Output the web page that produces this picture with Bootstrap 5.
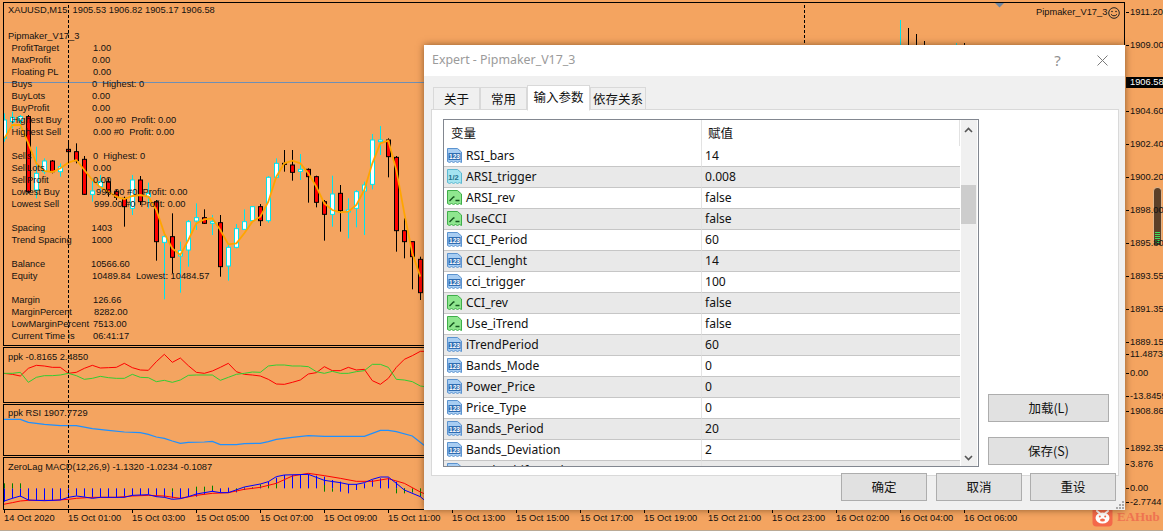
<!DOCTYPE html>
<html lang="en">
<head>
    <meta charset="UTF-8">
    <title>XAUUSD,M15 - Expert</title>
    <link rel="stylesheet" href="https://cdn.jsdelivr.net/npm/bootstrap@5.3.0/dist/css/bootstrap.min.css">
    <style>
        html, body { margin: 0; height: 531px; overflow: hidden; background: #f4a460; }
        body { font-family: "Noto Sans", "Liberation Sans", sans-serif; color: #111; }

        /* terminal */
        .terminal { position: relative; width: 1163px; height: 531px; padding: 2px 38px 0 3px; border-bottom: 1px solid #b9a995; }
        .pane { position: relative; flex: none; border: 1px solid #000; overflow: hidden; margin-bottom: 1px; }
        .pane-main { height: 344px; }
        .pane-a { height: 56px; }
        .pane-b { height: 52px; }
        .pane-c { height: 53px; }
        .pane svg { position: absolute; left: 0; top: 0; }
        .chart-txt { position: absolute; font-family: "Liberation Sans", sans-serif; font-size: 9.3px; line-height: 12px; white-space: pre; color: #111; }
        .axis { position: absolute; left: 1125px; top: 0; width: 38px; height: 531px; overflow: hidden; }
        .tick { position: absolute; background: #000; }
        .price-tag { position: absolute; left: 1px; width: 37px; height: 11px; background: #000; color: #fff; font-family: "Liberation Sans", sans-serif; font-size: 9.3px; line-height: 11px; padding-left: 4px; }
        .time-axis { position: absolute; left: 0; top: 510px; width: 1125px; height: 20px; }
        .pane svg.smiley { left: auto; right: 4px; top: 4px; }
        .bars-widget { position: absolute; left: 28px; top: 187px; width: 9px; height: 58px; background: #5b3f28; border: 1px solid #e0b48a; border-bottom: 0; border-radius: 5px 5px 0 0; }
        .bars-widget i { display: block; height: 1px; margin: 1px 1px 0; background: #3fe05a; }
        .bars-stack { margin-top: 44px; }
        .watermark { position: absolute; left: 1092px; top: 506px; }
        .watermark-txt { color: #ef7350; font-family: "Liberation Serif", serif; font-weight: 700; font-size: 13px; line-height: 20px; }

        /* dialog */
        .dlg { position: absolute; left: 424px; top: 45px; width: 701px; height: 465px; background: #f0f0f0; box-shadow: 0 0 7px rgba(70, 40, 10, .6); }
        .dlg-title { height: 31px; background: #fff; padding: 0 0 0 8px; font-size: 12.4px; color: #9b9b9b; }
        .dlg-help { font-size: 15px; color: #8f8f8f; width: 45px; text-align: center; }
        .dlg-close { width: 45px; text-align: center; }
        .dlg-tabs { height: 33px; padding: 9px 0 0 9px; border: 0; flex-wrap: nowrap; }
        .dlg-tabs .nav-link { height: 24px; margin: 2px 0 0; padding: 0; font-size: 12.5px; line-height: 22px; text-align: center; color: #111; background: #f0f0f0; border: 1px solid #d9d9d9; border-radius: 0; }
        .dlg-tabs .nav-link.active { height: 26px; margin-top: 0; background: #fff; border-bottom-color: #fff; position: relative; z-index: 2; }
        .tab-s { width: 47px; }
        .tab-m { width: 63px; }
        .tab-l { width: 56px; }
        .cjk { font-family: "Noto Sans CJK SC", "Noto Sans", sans-serif; }
        .dlg-panel { position: relative; height: 367px; margin: 0 6px 0 7px; background: #fff; border: 1px solid #d9d9d9; padding: 9px 0 0 11px; }
        .param-box { width: 536px; height: 348px; border: 1px solid #828790; position: relative; overflow: hidden; background: #fff; }
        .param-tbl { width: 516px; table-layout: fixed; margin: 0; border-collapse: separate; border-spacing: 0; --bs-table-bg: transparent; font-size: 12.1px; color: #111; }
        .param-tbl th, .param-tbl td { padding: 0; border: 0; font-weight: 400; vertical-align: middle; }
        .param-tbl th { height: 26px; font-size: 12.5px; }
        .param-tbl td { height: 21px; border-bottom: 1px solid #c6c6c6; line-height: 20px; }
        .param-tbl tbody tr:nth-child(even) td { background: #e9e9e9; }
        .param-tbl th:first-child { width: 257px; padding-left: 7px; }
        .param-tbl th:last-child { padding-left: 6px; border-left: 1px solid #e2e2e2; border-right: 1px solid #e2e2e2; }
        .param-tbl td:last-child { padding-left: 3px; border-left: 1px solid #e4e4e4; }
        .param-name { display: flex; align-items: center; gap: 3px; padding-left: 2px; height: 20px; }
        .param-scroll { position: absolute; right: 1px; top: 0; bottom: 0; width: 16px; background: #f0f0f0; }
        .scroll-thumb { position: absolute; left: 0; top: 65px; width: 15px; height: 39px; background: #cdcdcd; }
        .scroll-up { position: absolute; left: 3px; top: 7px; }
        .scroll-down { position: absolute; left: 3px; bottom: 5px; }
        .side-btns { position: absolute; left: 556px; top: 284px; width: 121px; gap: 15px; }
        .win-btn { --bs-btn-padding-y: 0; --bs-btn-padding-x: 0; --bs-btn-border-radius: 0; --bs-btn-font-size: 12.5px; background: #e1e1e1; border: 1px solid #adadad; color: #111; height: 28px; line-height: 24px; }
        .foot-btns { position: relative; z-index: 2; margin-top: -3px; padding-right: 9px; gap: 8px; }
        .foot-btns .win-btn { width: 86px; }
        .foot-btns .win-btn:first-child { margin-right: 1px; }
        .grip { position: absolute; right: 1px; bottom: 1px; }
    </style>
</head>
<body>
    <svg width="0" height="0" class="d-block">
        <defs>
            <symbol id="doc-blue" viewBox="0 0 17 16">
                <path d="M1.5 .5h10l4 3.500v10.500l-2-1-2 1-2-1-2 1-2-1-2 1-2-1z" fill="#a8cdf2" stroke="#5b93cf"/>
                <rect x="2.500" y="5" width="12" height="7" fill="#2f6db3"/>
                <text x="8.500" y="11" text-anchor="middle" font-size="6.500" font-weight="700" fill="#fff" font-family="Liberation Sans">123</text>
            </symbol>
            <symbol id="doc-cyan" viewBox="0 0 17 16">
                <path d="M1.5 .5h10l4 3.500v10.500l-2-1-2 1-2-1-2 1-2-1-2 1-2-1z" fill="#a4e3f0" stroke="#5cb9d2"/>
                <text x="7.500" y="11" text-anchor="middle" font-size="7.500" font-weight="700" fill="#23728c" font-family="Liberation Sans">1/2</text>
            </symbol>
            <symbol id="doc-green" viewBox="0 0 17 16">
                <path d="M1.5 .5h10l4 3.500v10.500l-2-1-2 1-2-1-2 1-2-1-2 1-2-1z" fill="#8fe68f" stroke="#3fae4a"/>
                <path d="M3.500 11l4-4h1M9.500 10.500H13.500" fill="none" stroke="#15561f" stroke-width="1.400"/>
            </symbol>
        </defs>
    </svg>

    <div class="terminal d-flex flex-column">
        <div class="pane pane-main" id="paneMain">
            <svg id="svgMain" width="1120" height="342" viewBox="4 3 1120 342"></svg>
            <svg class="smiley" width="12" height="12" viewBox="0 0 12 12">
                <circle cx="6" cy="6" r="5.300" fill="none" stroke="#222"/>
                <circle cx="4" cy="4.500" r=".8" fill="#222"/><circle cx="8" cy="4.500" r=".8" fill="#222"/>
                <path d="M3 7.300c1.500 2 4.500 2 6 0" fill="none" stroke="#222"/>
            </svg>
        </div>
        <div class="pane pane-a" id="paneA"><svg id="svgA" width="1120" height="54" viewBox="4 348 1120 54"></svg></div>
        <div class="pane pane-b" id="paneB"><svg id="svgB" width="1120" height="50" viewBox="4 405 1120 50"></svg></div>
        <div class="pane pane-c" id="paneC"><svg id="svgC" width="1120" height="51" viewBox="4 458 1120 51"></svg></div>

        <div class="time-axis" id="timeAxis"></div>
        <div class="axis" id="priceAxis">
            <div class="bars-widget"><div class="bars-stack"><i></i><i></i><i></i><i></i><i></i><i></i></div></div>
        </div>

        <div class="watermark d-flex align-items-center gap-1">
            <svg width="21" height="21" viewBox="0 0 21 21">
                <rect x=".5" y=".5" width="20" height="20" rx="4" fill="#f4684a"/>
                <path d="M5 5l3 2.500M16 5l-3 2.500" stroke="#fff" stroke-width="2" stroke-linecap="round"/>
                <ellipse cx="10.500" cy="12" rx="7" ry="5.500" fill="#fff"/>
                <circle cx="7.800" cy="10.500" r="1" fill="#f4684a"/><circle cx="13.200" cy="10.500" r="1" fill="#f4684a"/>
                <ellipse cx="10.500" cy="14" rx="2.500" ry="1.500" fill="#f4684a"/>
            </svg>
            <span class="watermark-txt">EAHub</span>
        </div>

        <!-- Expert properties window -->
        <div class="dlg d-flex flex-column">
            <div class="dlg-title d-flex align-items-center">
                <span class="flex-grow-1">Expert - Pipmaker_V17_3</span>
                <span class="dlg-help">?</span>
                <span class="dlg-close">
                    <svg width="11" height="11" viewBox="0 0 11 11"><path d="M.5.500l10 10M10.500.500l-10 10" stroke="#7a7a7a" fill="none"/></svg>
                </span>
            </div>
            <ul class="nav dlg-tabs cjk">
                <li class="nav-item"><a class="nav-link tab-s" href="#">关于</a></li>
                <li class="nav-item"><a class="nav-link tab-s" href="#">常用</a></li>
                <li class="nav-item"><a class="nav-link tab-m active" href="#">输入参数</a></li>
                <li class="nav-item"><a class="nav-link tab-l" href="#">依存关系</a></li>
            </ul>
            <div class="dlg-panel">
                <div class="param-box">
                    <table class="table param-tbl">
                        <thead>
                            <tr><th class="cjk">变量</th><th class="cjk">赋值</th></tr>
                        </thead>
                        <tbody id="paramRows"></tbody>
                    </table>
                    <div class="param-scroll">
                        <svg class="scroll-up" width="9" height="6" viewBox="0 0 9 6"><path d="M1 5l3.500-3.500L8 5" fill="none" stroke="#555" stroke-width="1.600"/></svg>
                        <div class="scroll-thumb"></div>
                        <svg class="scroll-down" width="9" height="6" viewBox="0 0 9 6"><path d="M1 1l3.500 3.500L8 1" fill="none" stroke="#555" stroke-width="1.600"/></svg>
                    </div>
                </div>
                <div class="side-btns d-flex flex-column">
                    <button type="button" class="btn win-btn cjk">加载(L)</button>
                    <button type="button" class="btn win-btn cjk">保存(S)</button>
                </div>
            </div>
            <div class="foot-btns d-flex justify-content-end">
                <button type="button" class="btn win-btn cjk">确定</button>
                <button type="button" class="btn win-btn cjk">取消</button>
                <button type="button" class="btn win-btn cjk">重设</button>
            </div>
            <svg class="grip" width="8" height="8" viewBox="0 0 8 8" fill="#a9a9a9">
                <rect x="6" y="0" width="2" height="2"/><rect x="3" y="3" width="2" height="2"/><rect x="6" y="3" width="2" height="2"/>
                <rect x="0" y="6" width="2" height="2"/><rect x="3" y="6" width="2" height="2"/><rect x="6" y="6" width="2" height="2"/>
            </svg>
        </div>
    </div>

    <script src="https://cdn.jsdelivr.net/npm/bootstrap@5.3.0/dist/js/bootstrap.bundle.min.js"></script>
    <script>
        const NS = 'http://www.w3.org/2000/svg';

        function add(svg, tag, attrs) {
            const el = document.createElementNS(NS, tag);
            for (const k in attrs) el.setAttribute(k, attrs[k]);
            svg.appendChild(el);
            return el;
        }

        // points are read off a 3x crop, so yBase is the crop's top edge
        function line(svg, pts, color, width, yBase) {
            add(svg, 'polyline', {
                points: pts.map(p => (p[0] / 3) + ',' + (p[1] / 3 + yBase)).join(' '),
                fill: 'none', stroke: color, 'stroke-width': width
            });
        }

        function label(parent, text, x, y) {
            const el = document.createElement('span');
            el.className = 'chart-txt';
            el.textContent = text;
            el.style.left = x + 'px';
            el.style.top = (y - 6) + 'px';
            parent.appendChild(el);
        }

        // candles: [up, high, low, bodyTop, bodyBottom] in crop coordinates
        const candles = [
            [1,340,425,360,415],[1,335,385,352,365],[1,345,385,350,362],[0,345,580,350,575],[1,440,595,520,570],
            [1,475,522,483,515],[0,480,520,483,515],[1,490,530,500,515],[0,420,490,448,455],[0,430,490,455,482],
            [0,468,585,478,583],[1,535,605,573,583],[1,525,575,545,560],[0,535,590,545,578],[0,570,600,575,592],
            [0,590,680,595,620],[1,525,645,540,625],[0,528,615,540,605],[1,548,625,580,590],[0,600,782,605,725],
            [1,700,898,710,727],[0,640,820,710,772],[1,725,878,752,768],[1,660,800,665,750],[1,610,690,653,663],
            [0,628,672,653,670],[1,645,705,665,670],[0,645,830,668,800],[1,730,842,742,798],[1,672,745,686,742],
            [1,628,690,665,688],[1,618,665,620,662],[0,612,678,620,662],[1,528,668,532,662],[1,475,535,490,532],
            [0,450,515,490,493],[0,450,542,495,517],[1,462,540,508,514],[0,505,608,508,530],[0,527,622,530,607],
            [0,600,722,605,643],[1,527,680,582,643],[0,555,695,580,632],[1,595,715,630,636],[1,570,682,575,625],
            [1,545,705,555,573],[1,402,568,420,553],[1,378,465,420,425],[0,415,532,420,470],[0,468,755,472,692],
            [0,655,775,692,725],[0,725,868,725,770],[0,770,900,778,878]
        ];

        const svgMain = document.getElementById('svgMain');
        svgMain.setAttribute('shape-rendering', 'crispEdges');
        add(svgMain, 'line', { x1: 4, x2: 1124, y1: 82.5, y2: 82.5, stroke: '#6f8fb3' });

        candles.forEach((c, i) => {
            const x = 4 + 8 * i;
            const wick = c[0] ? '#00e5ee' : '#000';
            add(svgMain, 'rect', { x: x, y: c[1] / 3, width: 1, height: (c[2] - c[1]) / 3, fill: wick });
            add(svgMain, 'rect', {
                x: x - 1.5, y: c[3] / 3, width: 4, height: (c[4] - c[3]) / 3,
                fill: c[0] ? '#fff' : '#f00', stroke: wick
            });
        });

        // wicks that stick out above the dialog
        [[900, 20, '#00e5ee'], [908, 28, '#000'], [916, 34, '#000'], [924, 41, '#000'], [956, 43, '#00e5ee'], [964, 43, '#000']].forEach(w => {
            add(svgMain, 'rect', { x: w[0], y: w[1], width: 1, height: 45 - w[1], fill: w[2] });
        });

        svgMain.removeAttribute('shape-rendering');
        line(svgMain, [[13,415],[37,375],[61,375],[85,430],[109,490],[133,513],[157,516],[181,505],[205,488],[229,480],[253,510],[277,540],[301,562],[325,575],[349,590],[373,597],[397,588],[421,585],[445,590],[469,630],[493,700],[517,745],[541,765],[565,720],[589,670],[613,658],[637,655],[661,690],[685,733],[709,730],[733,700],[757,665],[781,650],[805,605],[829,530],[853,490],[877,482],[901,490],[925,520],[949,560],[973,610],[997,630],[1021,637],[1045,635],[1069,615],[1093,570],[1117,490],[1141,430],[1165,422],[1189,510],[1213,640],[1237,760],[1261,830]], '#ffa500', 1.8, 0);
        add(svgMain, 'path', { d: 'M995 3h9l-4.500 4.500z', fill: '#6f86a0' });

        const svgA = document.getElementById('svgA');
        line(svgA, [[10,100],[37,103],[61,108],[85,85],[109,76],[133,78],[157,82],[181,82],[205,100],[229,97],[253,85],[277,76],[301,84],[325,83],[349,82],[373,70],[397,83],[421,90],[445,91],[469,65],[493,43],[517,67],[541,54],[565,77],[589,97],[613,100],[637,93],[661,82],[685,70],[709,95],[733,103],[757,105],[781,108],[805,118],[829,132],[853,133],[877,127],[901,120],[925,102],[949,98],[973,80],[997,92],[1021,92],[1045,82],[1069,90],[1093,88],[1117,122],[1141,133],[1165,115],[1189,82],[1213,58],[1237,47],[1261,34],[1275,34]], '#f00', 1, 340);
        line(svgA, [[10,100],[37,100],[61,97],[85,127],[109,112],[133,107],[157,107],[181,105],[205,100],[229,107],[253,118],[277,115],[301,109],[325,113],[349,115],[373,115],[397,103],[421,112],[445,113],[469,125],[493,121],[517,127],[541,120],[565,106],[589,105],[637,105],[661,121],[685,112],[709,103],[733,100],[757,96],[781,97],[805,78],[829,75],[853,75],[877,78],[901,78],[925,80],[949,95],[973,100],[997,94],[1021,100],[1045,100],[1069,95],[1093,92],[1117,73],[1141,73],[1165,82],[1189,118],[1213,120],[1237,125],[1261,138],[1275,140]], '#32cd32', 1, 340);

        const svgB = document.getElementById('svgB');
        line(svgB, [[10,238],[61,238],[85,247],[133,253],[181,257],[229,257],[277,266],[325,271],[373,276],[421,278],[445,283],[469,291],[493,295],[517,303],[541,310],[565,307],[613,306],[637,304],[661,314],[709,314],[733,311],[781,310],[805,305],[829,298],[877,292],[925,287],[973,289],[1093,289],[1117,280],[1141,271],[1165,271],[1189,275],[1237,288],[1275,318]], '#1e90ff', 1.2, 340);

        const svgC = document.getElementById('svgC');
        svgC.setAttribute('shape-rendering', 'crispEdges');
        // histogram, one entry per bar: segments [blue from, blue to, green from, green to] in the MACD crop
        const macdBars = [
            [100,140,85,100],[100,130,85,100],[100,125,85,100],[100,135],[100,137],[100,137],[100,137],[100,135],[100,128],[100,122],
            [100,125],[100,128],[100,127],[100,127],[100,127],[100,127],[100,122],[100,120],[100,118],[100,125],
            [100,127],[110,130,100,110],[100,130],[100,125],[108,125,95,108],[110,118,95,110],[105,110,92,105],[100,113],[98,113],[108,112,100,108],
            [100,105,97,100],[100,102,97,100],[95,100,88,95],[80,90,90,100],[68,85,85,100],[60,100],[60,100],[58,100],[58,100],[62,100],
            [65,90,90,110],[75,100,100,110],[80,110],[87,115],[87,105],[85,100],[75,95],[70,100],[68,100],[80,100,100,115],
            [100,105,100,115],[105,112,100,112],[115,125,100,122]
        ];
        macdBars.forEach((b, i) => {
            const x = 4 + 8 * i;
            add(svgC, 'rect', { x: x, y: 455 + b[0] / 3, width: 1, height: (b[1] - b[0]) / 3, fill: '#00f' });
            if (b.length > 2) add(svgC, 'rect', { x: x, y: 455 + b[2] / 3, width: 1, height: (b[3] - b[2]) / 3, fill: '#008000' });
        });
        svgC.removeAttribute('shape-rendering');
        line(svgC, [[10,493],[37,488],[61,483],[85,481],[133,481],[157,481],[205,478],[229,475],[277,472],[349,472],[397,468],[445,466],[493,468],[541,475],[589,466],[637,460],[685,458],[733,448],[781,442],[829,430],[877,408],[925,400],[973,407],[1021,415],[1069,424],[1117,424],[1165,416],[1213,430],[1261,456],[1275,462]], '#f00', 1, 340);
        line(svgC, [[10,484],[37,475],[61,468],[85,480],[133,482],[181,480],[205,472],[229,468],[253,471],[277,475],[301,472],[373,472],[397,466],[445,464],[469,470],[493,472],[517,478],[541,476],[565,470],[589,462],[637,454],[661,458],[685,458],[733,441],[781,432],[805,425],[829,410],[853,405],[925,403],[949,412],[973,421],[1021,428],[1045,433],[1069,433],[1093,428],[1117,418],[1141,411],[1165,411],[1189,430],[1213,450],[1261,470],[1275,482]], '#00f', 1, 340);

        // dashed crosshair and the dashed grid line above the dialog
        [svgMain, svgA, svgB, svgC].forEach(s => {
            add(s, 'line', { x1: 68.5, x2: 68.5, y1: 0, y2: 531, stroke: '#000', 'stroke-dasharray': '3 2' });
        });
        add(svgMain, 'line', { x1: 804.5, x2: 804.5, y1: 0, y2: 45, stroke: '#000', 'stroke-dasharray': '3 2' });

        // pane labels: screen x/y, pane offset removed
        const paneMain = document.getElementById('paneMain');
        const info = [
            ['XAUUSD,M15  1905.53 1906.82 1905.17 1906.58', 8, 10], ['Pipmaker_V17_3', 8, 36],
            ['ProfitTarget', 11.5, 48], ['1.00', 93, 48], ['MaxProfit', 11.5, 60], ['0.00', 92, 60],
            ['Floating PL', 11.5, 72], ['0.00', 93, 72], ['Buys', 11.5, 84], ['0  Highest: 0', 92, 84],
            ['BuyLots', 11.5, 96], ['0.00', 92, 96], ['BuyProfit', 11.5, 108], ['0.00', 92, 108],
            ['Highest Buy', 11.5, 120], ['0.00 #0  Profit: 0.00', 95, 120], ['Highest Sell', 11.5, 132], ['0.00 #0  Profit: 0.00', 93, 132],
            ['Sells', 11.5, 156], ['0  Highest: 0', 93, 156], ['SellLots', 11.5, 168], ['0.00', 93, 168],
            ['SellProfit', 11.5, 180], ['0.00', 93, 180], ['Lowest Buy', 11.5, 192], ['999.00 #0  Profit: 0.00', 96, 192],
            ['Lowest Sell', 11.5, 204], ['999.00 #0  Profit: 0.00', 94, 204], ['Spacing', 11.5, 228], ['1403', 91.500, 228],
            ['Trend Spacing', 11.5, 240], ['1000', 91.500, 240], ['Balance', 11.5, 264], ['10566.60', 91, 264],
            ['Equity', 11.5, 276], ['10489.84  Lowest: 10484.57', 92, 276], ['Margin', 11.5, 300], ['126.66', 93, 300],
            ['MarginPercent', 11.5, 312], ['8282.00', 94, 312], ['LowMarginPercent', 11.5, 324], ['7513.00', 93, 324],
            ['Current Time is', 11.5, 336], ['06:41:17', 93, 336], ['Pipmaker_V17_3', 1036, 12]
        ];
        info.forEach(t => label(paneMain, t[0], t[1] - 4, t[2] - 3));

        label(document.getElementById('paneA'), 'ppk -0.8165 2.4850', 4, 9);
        label(document.getElementById('paneB'), 'ppk RSI 1907.7729', 4, 8);
        label(document.getElementById('paneC'), 'ZeroLag MACD(12,26,9) -1.1320 -1.0234 -0.1087', 4, 9);

        // right price axis
        const priceAxis = document.getElementById('priceAxis');
        [['1911.20', 12], ['1909.00', 45], ['1904.60', 111], ['1902.40', 144], ['1900.20', 177], ['1898.00', 210], ['1895.80', 243], ['1893.55', 276], ['1891.35', 309], ['1889.15', 342], ['11.4873', 354], ['0.00', 373], ['-13.8459', 396], ['1908.866', 411], ['1892.358', 448], ['3.876', 464], ['0.00', 488], ['-2.7744', 502]].forEach(p => {
            label(priceAxis, p[0], 5, p[1]);
            const tick = document.createElement('div');
            tick.className = 'tick';
            Object.assign(tick.style, { left: '1px', top: p[1] + 'px', width: '3px', height: '1px' });
            priceAxis.appendChild(tick);
        });
        const tag = document.createElement('div');
        tag.className = 'price-tag';
        tag.style.top = '77px';
        tag.textContent = '1906.58';
        priceAxis.appendChild(tag);

        // bottom time axis
        const timeAxis = document.getElementById('timeAxis');
        ['14 Oct 2020', '15 Oct 01:00', '15 Oct 03:00', '15 Oct 05:00', '15 Oct 07:00', '15 Oct 09:00', '15 Oct 11:00', '15 Oct 13:00', '15 Oct 15:00', '15 Oct 17:00', '15 Oct 19:00', '15 Oct 21:00', '15 Oct 23:00', '16 Oct 02:00', '16 Oct 04:00', '16 Oct 06:00'].forEach((t, i) => {
            const x = 4 + 64 * i;
            label(timeAxis, t, x, 8);
            const tick = document.createElement('div');
            tick.className = 'tick';
            Object.assign(tick.style, { left: x + 'px', top: '0', width: '1px', height: '3px' });
            timeAxis.appendChild(tick);
        });

        // input parameters
        const params = [
            ['doc-blue', 'RSI_bars', '14'], ['doc-cyan', 'ARSI_trigger', '0.008'], ['doc-green', 'ARSI_rev', 'false'],
            ['doc-green', 'UseCCI', 'false'], ['doc-blue', 'CCI_Period', '60'], ['doc-blue', 'CCI_lenght', '14'],
            ['doc-blue', 'cci_trigger', '100'], ['doc-green', 'CCI_rev', 'false'], ['doc-green', 'Use_iTrend', 'false'],
            ['doc-blue', 'iTrendPeriod', '60'], ['doc-blue', 'Bands_Mode', '0'], ['doc-blue', 'Power_Price', '0'],
            ['doc-blue', 'Price_Type', '0'], ['doc-blue', 'Bands_Period', '20'], ['doc-blue', 'Bands_Deviation', '2'],
            ['doc-blue', 'Bands_Shift_Mode', '0']
        ];
        document.getElementById('paramRows').innerHTML = params.map(p => `
            <tr>
                <td><div class="param-name"><svg width="17" height="16"><use href="#${p[0]}"></use></svg><span>${p[1]}</span></div></td>
                <td>${p[2]}</td>
            </tr>`).join('');
    </script>
</body>
</html>
